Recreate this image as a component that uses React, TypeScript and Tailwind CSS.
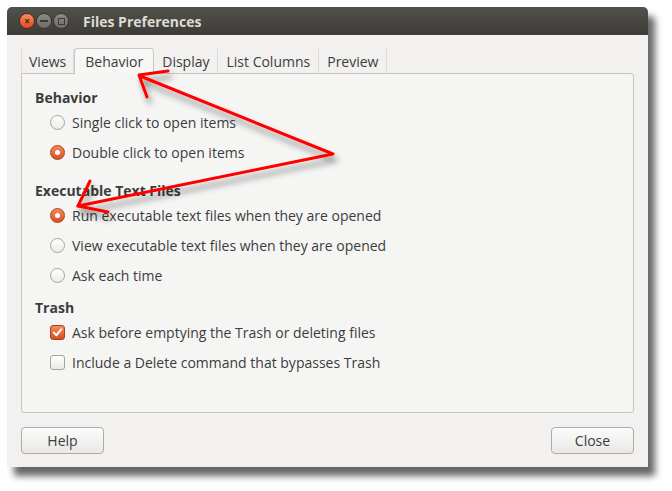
import React from 'react';

const font = { fontFamily: '"Open Sans", "Noto Sans", sans-serif' };

const Radio: React.FC<{ checked?: boolean }> = ({ checked }) =>
  checked ? (
    <span className="w-[15px] h-[15px] rounded-full border border-[#a8461b] bg-gradient-to-b from-[#f58a5c] to-[#d6501c] flex items-center justify-center shrink-0">
      <span className="w-[5px] h-[5px] rounded-full bg-white" />
    </span>
  ) : (
    <span className="w-[15px] h-[15px] rounded-full border border-[#a7a49f] bg-gradient-to-b from-white to-[#ebeae8] shrink-0" />
  );

const Check: React.FC<{ checked?: boolean }> = ({ checked }) =>
  checked ? (
    <span className="w-[15px] h-[15px] rounded-[3px] border border-[#a8461b] bg-gradient-to-b from-[#f58a5c] to-[#d6501c] flex items-center justify-center shrink-0">
      <svg width="11" height="11" viewBox="0 0 11 11">
        <path d="M1.8 5.6 L4.4 8.2 L9.3 2.3" fill="none" stroke="white" strokeWidth="2" strokeLinecap="round" strokeLinejoin="round" />
      </svg>
    </span>
  ) : (
    <span className="w-[15px] h-[15px] rounded-[3px] border border-[#a7a49f] bg-gradient-to-b from-white to-[#ebeae8] shrink-0" />
  );

const Row: React.FC<{ control: React.ReactNode; label: string }> = ({ control, label }) => (
  <div className="h-[30px] flex items-center gap-[7px] pl-[15px]">
    {control}
    <span>{label}</span>
  </div>
);

const tabs = ['Views', 'Behavior', 'Display', 'List Columns', 'Preview'];

export default function App() {
  return (
    <div className="relative w-[672px] h-[491px] bg-white overflow-hidden" style={font}>
      {/* Window */}
      <div className="ml-[7px] mt-[7px] w-[641px] h-[460px] flex flex-col rounded-t-[5px] shadow-[7px_9px_7px_rgba(0,0,0,0.6)] bg-[#f2f1f0]">
        {/* Title bar */}
        <div className="h-[28px] rounded-t-[5px] bg-gradient-to-b from-[#52514c] to-[#3c3b37] flex items-center pl-[12px]">
          <div className="flex gap-[1px]">
            <span className="w-[16px] h-[16px] rounded-full bg-gradient-to-b from-[#f78b5f] to-[#e0491a] border border-[#5a2c1c] flex items-center justify-center text-[#4a1d0c] text-[10px] leading-none font-bold">×</span>
            <span className="w-[16px] h-[16px] rounded-full bg-gradient-to-b from-[#8d8b86] to-[#6e6c67] border border-[#3a3935] flex items-center justify-center">
              <span className="w-[8px] h-[2px] bg-[#3c3b37]" />
            </span>
            <span className="w-[16px] h-[16px] rounded-full bg-gradient-to-b from-[#8d8b86] to-[#6e6c67] border border-[#3a3935] flex items-center justify-center">
              <span className="w-[7px] h-[7px] border-[1.5px] border-[#3c3b37]" />
            </span>
          </div>
          <span className="ml-[14px] text-[14px] font-bold text-[#dfdbd2]">Files Preferences</span>
        </div>

        {/* Body */}
        <div className="flex-1 flex flex-col px-[14px] pt-[12px] pb-[13px] text-[14px] text-[#3c3c3c]">
          {/* Tabs */}
          <div className="flex items-end h-[26px]">
            {tabs.map((t) =>
              t === 'Behavior' ? (
                <div key={t} className="h-[26px] px-[10px] flex items-center border border-b-0 border-[#c9c6c1] rounded-t-[4px] bg-[#f7f7f6] relative top-[1px]">
                  {t}
                </div>
              ) : t === 'Views' ? (
                <div key={t} className="h-[24px] px-[7px] flex items-center border-l border-r border-[#dedbd6]">
                  {t}
                </div>
              ) : (
                <div key={t} className="h-[24px] px-[8px] flex items-center border-r border-[#dedbd6]">
                  {t}
                </div>
              )
            )}
          </div>

          {/* Panel */}
          <div className="h-[340px] border border-[#c9c6c1] rounded-b-[3px] rounded-tr-[3px] bg-[#f5f5f4] px-[13px] pt-[13px]">
            <div className="font-bold h-[20px] flex items-center">Behavior</div>
            <div>
              <Row control={<Radio />} label="Single click to open items" />
              <Row control={<Radio checked />} label="Double click to open items" />
            </div>

            <div className="font-bold h-[20px] flex items-center mt-[13px]">Executable Text Files</div>
            <div>
              <Row control={<Radio checked />} label="Run executable text files when they are opened" />
              <Row control={<Radio />} label="View executable text files when they are opened" />
              <Row control={<Radio />} label="Ask each time" />
            </div>

            <div className="font-bold h-[20px] flex items-center mt-[7px]">Trash</div>
            <div>
              <Row control={<Check checked />} label="Ask before emptying the Trash or deleting files" />
              <Row control={<Check />} label="Include a Delete command that bypasses Trash" />
            </div>
          </div>

          {/* Buttons */}
          <div className="mt-auto flex justify-between">
            <button className="w-[83px] h-[27px] rounded-[4px] border border-[#aeaca8] bg-gradient-to-b from-[#fcfcfc] to-[#e9e8e6] text-[#3c3c3c]">Help</button>
            <button className="w-[83px] h-[27px] rounded-[4px] border border-[#aeaca8] bg-gradient-to-b from-[#fcfcfc] to-[#e9e8e6] text-[#3c3c3c]">Close</button>
          </div>
        </div>
      </div>

      {/* Red annotation arrows */}
      <svg className="absolute left-0 top-0" width="672" height="491" viewBox="0 0 672 491">
        <defs>
          <filter id="sh" x="-20%" y="-20%" width="140%" height="160%">
            <feDropShadow dx="3" dy="6" stdDeviation="3" floodColor="#000" floodOpacity="0.45" />
          </filter>
        </defs>
        <g filter="url(#sh)" fill="none" stroke="#ff0000" strokeWidth="3" strokeLinecap="round" strokeLinejoin="round">
          <polyline points="140,76 333,154 78,206" />
          <polyline points="168,71 139,75 147,97" />
          <polyline points="90,181 78,206 108,212" />
        </g>
      </svg>
    </div>
  );
}
